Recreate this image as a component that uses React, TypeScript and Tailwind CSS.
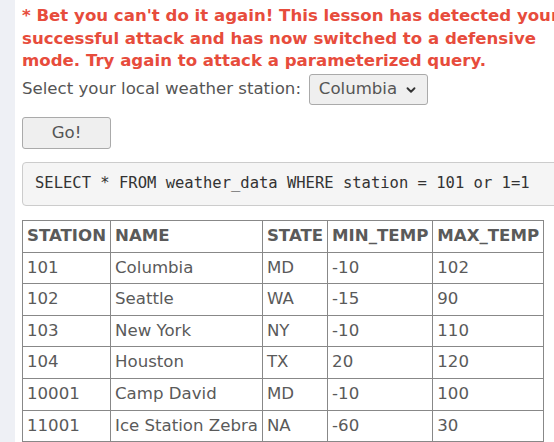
import { ChevronDown } from "lucide-react";

const ROWS = [
  ["101", "Columbia", "MD", "-10", "102"],
  ["102", "Seattle", "WA", "-15", "90"],
  ["103", "New York", "NY", "-10", "110"],
  ["104", "Houston", "TX", "20", "120"],
  ["10001", "Camp David", "MD", "-10", "100"],
  ["11001", "Ice Station Zebra", "NA", "-60", "30"],
];

const HEAD = ["STATION", "NAME", "STATE", "MIN_TEMP", "MAX_TEMP"];

export default function App() {
  return (
    <div className="flex h-[442px] w-[554px] overflow-hidden bg-white font-['DejaVu_Sans',sans-serif] text-[#555]">
      <div className="w-[15px] shrink-0 bg-[#eef0f5]" />
      <div className="min-w-0 flex-1 pl-[7px]">
        <p className="mt-[5px] w-[600px] text-[16.6px] font-bold leading-[22.5px] text-[#e74c3c]">
          * Bet you can't do it again! This lesson has detected your
          <br />
          successful attack and has now switched to a defensive
          <br />
          mode. Try again to attack a parameterized query.
        </p>

        <div className="mt-[1.5px] flex items-center gap-[8px] text-[16.6px]">
          <span>Select your local weather station:</span>
          <button
            type="button"
            className="flex h-[31px] w-[119px] items-center justify-center gap-[7px] rounded-[3px] border border-[#aaa] bg-[#efefef] text-[#555]"
          >
            Columbia
            <ChevronDown size={14} strokeWidth={3.2} className="text-[#333]" />
          </button>
        </div>

        <button
          type="button"
          className="mt-[12px] h-[32px] w-[89px] rounded-[3px] border border-[#aaa] bg-[#efefef] text-[16.6px] text-[#555]"
        >
          Go!
        </button>

        <div className="mt-[13px] flex h-[44px] w-[560px] items-center rounded-[4px] border border-[#ccc] bg-[#f5f5f5] pl-[12px] font-['DejaVu_Sans_Mono',monospace] text-[15.5px] text-[#333]">
          SELECT * FROM weather_data WHERE station = 101 or 1=1
        </div>

        <table className="mt-[14px] border-collapse border border-[#888] text-[16.6px] text-[#5a5a5a]">
          <thead>
            <tr>
              {HEAD.map((h) => (
                <th
                  key={h}
                  className="border border-[#888] px-[4px] py-[4px] text-left font-bold leading-[22.6px]"
                >
                  {h}
                </th>
              ))}
            </tr>
          </thead>
          <tbody>
            {ROWS.map((r) => (
              <tr key={r[0]}>
                {r.map((c, i) => (
                  <td key={i} className="border border-[#888] px-[4px] py-[4px] leading-[22.6px]">
                    {c}
                  </td>
                ))}
              </tr>
            ))}
          </tbody>
        </table>
      </div>
    </div>
  );
}
